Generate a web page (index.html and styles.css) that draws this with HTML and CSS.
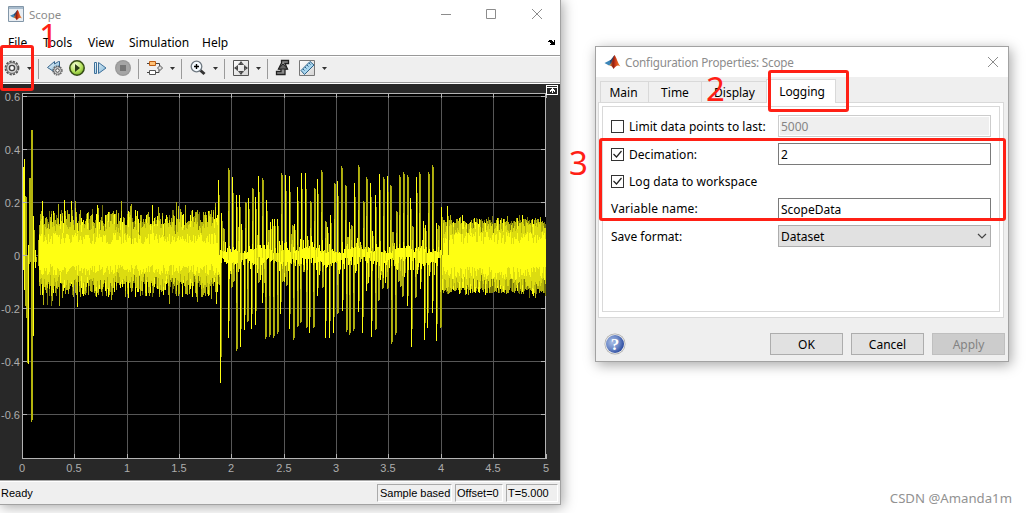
FILE: index.html
```html
<!DOCTYPE html>
<html lang="en">
<head>
<meta charset="utf-8">
<title>Scope</title>
<link rel="stylesheet" href="styles.css">
</head>
<body>
<svg class="defs" width="0" height="0">
  <defs>
    <linearGradient id="flame" x1="0" x2="1" y1="0" y2="0"><stop offset="0" stop-color="#e8a33a"/><stop offset=".35" stop-color="#8c1d14"/><stop offset=".6" stop-color="#d8431a"/><stop offset="1" stop-color="#e98b2c"/></linearGradient>
    <radialGradient id="green" cx=".4" cy=".3" r=".75"><stop offset="0" stop-color="#f6ffd8"/><stop offset=".6" stop-color="#b5e25c"/><stop offset="1" stop-color="#6ba51e"/></radialGradient>
    <linearGradient id="blue" x1="0" x2="1" y1="0" y2="1"><stop offset="0" stop-color="#eaf6fc"/><stop offset="1" stop-color="#7fb4d6"/></linearGradient>
    <radialGradient id="help" cx=".35" cy=".4" r=".7"><stop offset="0" stop-color="#a9bee6"/><stop offset=".55" stop-color="#6c88c6"/><stop offset="1" stop-color="#24439a"/></radialGradient>
    <linearGradient id="paper" x1="0" x2="1" y1="0" y2="1"><stop offset="0" stop-color="#fff"/><stop offset="1" stop-color="#d4d4d4"/></linearGradient>
    <symbol id="matlab" viewBox="0 0 16 16">
      <path d="M0 9 5 6.500 7.500 9.500 4.500 11.500Z" fill="#3d86b8"/>
      <path d="M5 6.500C7 6 8 3 10 1L8.500 8 6.500 10.500Z" fill="#274a73"/>
      <path d="M10 1C12 3 13 9 16 12.500 13 10.500 11.500 12 9 15 8 12.500 6.500 11.500 4.500 11.500 7.500 10 8 4 10 1Z" fill="url(#flame)"/>
    </symbol>
    <symbol id="gear" viewBox="0 0 16 16">
      <circle cx="8" cy="8" r="6.500" fill="none" stroke="#555" stroke-width="1.800" stroke-dasharray="2.300 1.100"/>
      <circle cx="8" cy="8" r="5.400" fill="#d6d6d6" stroke="#5a5a5a" stroke-width=".9"/>
      <circle cx="8" cy="8" r="2.600" fill="#fafafa" stroke="#444" stroke-width="1.400"/>
    </symbol>
  </defs>
</svg>

<main class="desktop">
  <section class="window scope">
    <header class="scope-title">
      <svg class="app-icon" width="16" height="16"><path d="M.5.5h15v15H.5z" fill="#e9eef3" stroke="#8296a8"/><path d="M1 1h14v2H1z" fill="#a9bccd"/><use href="#matlab" x="2" y="3" width="12" height="12"/></svg>
      <span class="title-text">Scope</span>
      <svg class="caption" width="102" height="16" fill="none" stroke="#8c8c8c"><path d="M0 8.500h10M45.500 3.500h9v9h-9zM91 3l10 10M101 3 91 13"/></svg>
    </header>
    <nav class="menu">
      <span class="m-file">File</span><span class="m-tools">Tools</span><span class="m-view">View</span><span class="m-sim">Simulation</span><span class="m-help">Help</span>
      <svg class="dock" width="8" height="6" shape-rendering="crispEdges"><path d="M0 1h1v1H0zM1 0h3v1h1v1h1V0h1v5H2V4h1V3H2V2H1z" fill="#000"/></svg>
    </nav>
    <div class="toolbar">
      <svg width="560" height="25" viewBox="0 57 560 25">
        <use href="#gear" x="4" y="60" width="16" height="16"/>
        <g stroke="#9a9a9a"><path d="M38.500 59v20M138.500 59v20M181.500 59v20M224.500 59v20M267.500 59v20"/></g>
        <g fill="#333"><path id="arrow" d="M27 67h5l-2.500 3z"/><use href="#arrow" x="143"/><use href="#arrow" x="186"/><use href="#arrow" x="229"/><use href="#arrow" x="295"/></g>
        <path d="M47.500 67.500 54.500 61.500v2.500l4-2.500h1v8l-5 4v-1.500z" fill="url(#blue)" stroke="#37658c"/>
        <use href="#gear" x="52" y="65" width="11" height="11"/>
        <circle cx="77" cy="68" r="7.200" fill="url(#green)" stroke="#354c16" stroke-width="1.500"/><path d="M75 64v8l5-4z" fill="#2b3d17"/>
        <path d="M94.500 62.500h2v11h-2zM98.500 62.500v11l7.500-5.500z" fill="url(#blue)" stroke="#3e719b"/>
        <circle cx="123" cy="68" r="8" fill="#999"/><circle cx="123" cy="68" r="6.800" fill="#a5a5a5"/><path d="M120 65h6v6h-6z" fill="#757575"/>
        <path d="M155 63.500h4.500v4M156 72.500h3v-3M147 63.500h2M147 72.500h2" fill="none" stroke="#444"/>
        <path d="M149.500 61.500h6v4h-6z" fill="#ffc277" stroke="#bd5d13"/><path d="M149.500 70.500h6v4h-6z" fill="#fff" stroke="#555"/><path d="m160 65.500 2.500 2.500-2.500 2.500-2.500-2.500z" fill="#ddd" stroke="#555"/>
        <path d="m200 70 4.500 4" stroke="#333" stroke-width="3"/><circle cx="196.500" cy="66.500" r="5.300" fill="#f5fbff" stroke="#707a82" stroke-width="1.300"/><path d="M194 66.500h5M196.500 64v5" stroke="#000" stroke-width="1.400"/>
        <path d="M233.500 60.500h15v15h-15z" fill="url(#paper)" stroke="#555"/><path d="m241 61 3 4h-6zM241 75l3-4h-6zM234 68l4-3v6zM248 68l-4-3v6z" fill="#444"/><circle cx="241" cy="68" r="4.500" fill="none" stroke="#777" stroke-dasharray="2 1.500"/>
        <path d="M276.500 71.500H281V69h-2.500l3-6v-2.500h7v3H285L287.500 69H285v5.500h-8.500z" fill="#8c8c8c" stroke="#222" stroke-width="1.300"/><path d="M278.500 69 283 64l4.500 5z" fill="#666" stroke="#222"/>
        <path d="M299.500 60.500h15v15h-15z" fill="url(#paper)" stroke="#777"/><path d="m301 70.500 9-9 4 3.500-9.500 9.500z" fill="#a8d5ee" stroke="#2e6287"/><path d="m303 69 1.500 1.500M305 67l1.500 1.500M307 65l1.500 1.500M309 63l1.500 1.500" stroke="#2e6287"/>
      </svg>
    </div>
    <div class="plot">
      <svg id="chart" width="560" height="396" viewBox="0 84 560 396" shape-rendering="crispEdges"></svg>
    </div>
    <footer class="status"><span class="ready">Ready</span><span class="cell sample">Sample based</span><span class="cell offset">Offset=0</span><span class="cell time">T=5.000</span></footer>
  </section>

  <section class="window dialog">
    <header class="dialog-title">
      <svg width="17" height="17"><use href="#matlab" width="17" height="16"/></svg>
      <span class="dialog-name">Configuration Properties: Scope</span>
      <svg class="close" width="12" height="12" stroke="#8c8c8c"><path d="m1 1 10 10M11 1 1 11"/></svg>
    </header>
    <div class="tabs"><span class="tab t-main">Main</span><span class="tab t-time">Time</span><span class="tab t-display">Display</span><span class="tab t-logging active">Logging</span></div>
    <div class="pane"><div class="form">
      <label class="row"><span class="label"><i class="box"></i><span class="l-limit">Limit data points to last:</span></span><span class="field disabled">5000</span></label>
      <label class="row"><span class="label"><i class="box"><svg width="11" height="11"><path d="m1.500 5 3 3 5-6" fill="none" stroke="#222" stroke-width="1.200"/></svg></i><span class="l-dec">Decimation:</span></span><span class="field">2</span></label>
      <label class="row"><span class="label"><i class="box"><svg width="11" height="11"><path d="m1.500 5 3 3 5-6" fill="none" stroke="#222" stroke-width="1.200"/></svg></i><span class="l-log">Log data to workspace</span></span></label>
      <label class="row"><span class="label"><span class="l-var">Variable name:</span></span><span class="field">ScopeData</span></label>
      <label class="row"><span class="label"><span class="l-save">Save format:</span></span><span class="field select">Dataset<svg width="10" height="6"><path d="m1 1 4 4 4-4" fill="none" stroke="#444" stroke-width="1.200"/></svg></span></label>
    </div></div>
    <footer class="actions">
      <svg class="help" width="22" height="22"><circle cx="11" cy="11" r="10.500" fill="#aaa"/><circle cx="11" cy="11" r="9.800" fill="#eee"/><circle cx="11" cy="11" r="9" fill="url(#help)"/><text x="11" y="17" text-anchor="middle">?</text></svg>
      <span class="button">OK</span><span class="button">Cancel</span><span class="button off">Apply</span>
    </footer>
  </section>

  <div class="mark mark-1"></div><div class="mark mark-2"></div><div class="mark mark-3"></div>
  <span class="num num-1">1</span><span class="num num-2">2</span><span class="num num-3">3</span>
  <span class="credit">CSDN @Amanda1m</span>
</main>
<script src="plot.js"></script>
</body>
</html>
```
FILE: styles.css
```css
body { margin: 0; background: #fff; color: #000; }
.defs { position: absolute; }
.desktop { position: relative; width: 1026px; height: 513px; overflow: hidden; font: 12px "Noto Sans", sans-serif; white-space: nowrap; }
svg { display: block; flex: none; }
.window { position: absolute; box-sizing: border-box; display: flex; flex-direction: column; border: 1px solid #a2a2a2; }

.scope { left: -1px; top: -1px; width: 562px; height: 506px; background: #fff; box-shadow: 2px 2px 12px rgba(0,0,0,.35); }
.scope-title { height: 28px; display: flex; align-items: center; padding: 0 17px 0 8px; color: #8c8c8c; }
.title-text { margin-left: 5px; font-size: 11.500px; }
.caption { margin-left: auto; }
.menu { height: 27px; box-sizing: border-box; display: flex; align-items: center; padding: 2px 4px 0 8px; }
.menu span { flex: none; }
.m-file { width: 35px; } .m-tools { width: 45px; } .m-view { width: 41px; } .m-sim { width: 73px; }
.dock { margin-left: auto; }
.toolbar { height: 25px; background: #efefef; border: solid #999; border-width: 1px 0; box-shadow: inset 0 1px #fff; padding-top: 1px; }
.plot { height: 396px; margin-top: 1px; background: #282828; }
.plot text { font: 11px "Liberation Sans", sans-serif; fill: #adadad; }
.status { height: 24px; box-sizing: border-box; display: flex; align-items: center; gap: 3px; background: #efefef; border-top: 1px solid #a8a8a8; box-shadow: inset 0 1px #fff; padding: 1px 2px 0 1px; font: 11px "Liberation Sans", sans-serif; }
.ready { margin-right: auto; }
.cell { box-sizing: border-box; height: 18px; line-height: 16px; padding-left: 2px; border: 1px solid; border-color: #aaa #fff #fff #aaa; }
.sample { width: 75px; padding-left: 2px; } .offset { width: 48px; padding-left: 1px; } .time { width: 52px; padding-left: 1px; }

.dialog { left: 595px; top: 46px; width: 414px; height: 316px; background: #efefef; box-shadow: 2px 3px 12px rgba(0,0,0,.35); }
.dialog-title { height: 30px; display: flex; align-items: center; padding: 0 9px 0 8px; background: #fff; color: #8c8c8c; font-size: 11.700px; }
.dialog-name { margin-left: 4px; letter-spacing: -.19px; }
.close { margin-left: auto; }
.tabs { height: 25px; box-sizing: border-box; display: flex; align-items: flex-end; padding-left: 4px; }
.tab { box-sizing: border-box; height: 21px; line-height: 21px; text-align: center; background: #f0f0f0; border: solid #d9d9d9; border-width: 1px 0 0 1px; }
.t-main { width: 48px; padding-right: 2px; } .t-time { width: 53px; } .t-display { width: 65px; padding-left: 1px; }
.tab.active { width: 70px; height: 24px; line-height: 23px; margin-bottom: -1px; padding: 0 0 1px 2px; letter-spacing: -.1px; background: #fff; border-right-width: 1px; z-index: 1; }
.pane { width: 406px; height: 216px; box-sizing: border-box; margin-left: 2px; padding: 3px; background: #fff; border: 1px solid #d9d9d9; }
.form { box-sizing: border-box; width: 398px; height: 206px; padding: 5px 8px; border: 1px solid #d9d9d9; display: grid; grid-template-rows: 28px 28px 27px 27px 28px; align-content: start; }
.row { display: flex; align-items: center; }
.label { width: 167px; display: flex; align-items: center; gap: 5px; }
.box { box-sizing: border-box; width: 13px; height: 13px; background: #fff; border: 1px solid #333; }
.field { flex: none; box-sizing: border-box; width: 213px; height: 22px; line-height: 21px; padding-left: 2px; border: 1px solid #7a7a7a; background: #fff; }
.disabled { color: #858585; background: #efefef; border-color: #ccc; box-shadow: inset 0 0 0 1px #fff; }
.select { display: flex; align-items: center; justify-content: space-between; background: #e1e1e1; border-color: #adadad; padding-right: 3px; }
.l-limit, .l-dec, .l-log, .l-var { letter-spacing: .04px; }
.l-var { letter-spacing: .2px; }
.actions { display: flex; align-items: center; gap: 8px; padding: 15px 3px 0 8px; }
.help { margin-right: auto; }
.help text { font: bold 17px "Liberation Serif", serif; fill: #fff; }
.button { box-sizing: border-box; width: 73px; height: 22px; line-height: 21px; text-align: center; background: #e1e1e1; border: 1px solid #adadad; }
.off { color: #838383; background: #ccc; border-color: #bfbfbf; }

.mark { position: absolute; z-index: 2; box-sizing: border-box; border: 3px solid #ff2015; border-radius: 3px; }
.mark-1 { left: 0; top: 45px; width: 34px; height: 46px; }
.mark-2 { left: 768px; top: 70px; width: 81px; height: 42px; }
.mark-3 { left: 599px; top: 138px; width: 407px; height: 83px; }
.num { position: absolute; z-index: 2; font-size: 33px; line-height: 40px; color: #ff2015; }
.num-1 { left: 39px; top: 16px; } .num-2 { left: 706px; top: 69px; } .num-3 { left: 569px; top: 143px; }
.credit { position: absolute; right: 14px; top: 489px; font: 13.200px/18px "Noto Sans", sans-serif; color: #929292; }
```
FILE: plot.js
```js
const out = [];
const rect = (x, y, w, h, fill) => out.push(`<rect x="${x}" y="${y}" width="${w}" height="${h}" fill="${fill}"/>`);
const ZERO = 255;
rect(22, 93, 524, 366, '#000');
for (let i = 1; i < 10; i++) rect(Math.round(22 + i * 52.35), 94, 1, 364, '#575757');
for (let i = 0; i < 7; i++) rect(23, 96 + i * 53, 522, 1, '#575757');

// Repeatable noise
let seed = 7;
const rnd = () => (seed = (seed * 16807) % 2147483647) / 2147483647;
const BRIGHT = '#ffff12', MID = '#dcdc10', DIM = '#b4b40e', DARK = '#77770a';

function band(x0, x1, up, down, jitter) {
  for (let x = x0; x < x1; x++) {
    const t = up + rnd() * jitter * 0.7 + (rnd() < 0.12 ? jitter * 0.45 : 0);
    const b = down + rnd() * jitter * 0.7 + (rnd() < 0.12 ? jitter * 0.45 : 0);
    rect(x, ZERO - t, 1, t + b, rnd() < 0.2 ? BRIGHT : rnd() < 0.3 ? DARK : DIM);
    const mt = t * (0.6 + rnd() * 0.35), mb = b * (0.6 + rnd() * 0.35);
    rect(x, ZERO - mt, 1, mt + mb, MID);
    const ct = up * (0.35 + rnd() * 0.4), cb = down * (0.35 + rnd() * 0.4);
    rect(x, ZERO - ct, 1, ct + cb, BRIGHT);
  }
}
band(39, 220, 30, 27, 22);
band(441, 546, 31, 33, 9);
rect(131, 204, 1, 40, DIM); rect(97, 205, 1, 40, BRIGHT); rect(152, 205, 1, 40, BRIGHT);
rect(42, 201, 1, 54, BRIGHT); rect(59, 275, 1, 31, DIM); rect(169, 275, 1, 29, DIM);

// Start-up transient
[[23,167,270,1],[24,159,290,1],[25,196,306,0],[26,197,318,0],[27,255,363,0],[28,245,364,1],[29,178,264,0],[30,178,262,0],[31,130,422,0],[32,130,420,0],[33,216,336,1],[34,230,262,0],[35,250,268,1],[36,257,262,0],[38,240,266,0]]
  .forEach(([x, a, b, bright]) => rect(x, a, 1, b - a, bright ? BRIGHT : DIM));

// Spikes as x, y pairs in thirds of a pixel from (200, 140)
const up = [55,120,65,220,71,264,86,84,97,112,108,165,114,262,119,165,125,252,135,187,146,174,157,144,165,170,171,285,176,108,187,114,199,180,206,270,212,247,218,237,223,237,233,238,244,99,255,106,267,108,273,282,277,256,283,252,293,141,305,99,315,99,322,288,332,183,342,144,353,117,364,90,376,243,382,260,391,225,403,129,413,124,424,78,436,136,442,292,447,246,453,255,463,129,474,75,480,305,489,183,500,111,
  511,129,517,273,527,165,538,102,549,111,561,108,572,135,577,276,588,213,599,105,610,96,621,105,632,174,638,258,648,111,659,96,670,243,676,255,685,96,696,75,708,249,714,255,723,202,742,198];
const down = [62,728,84,593,89,416,95,445,100,425,110,632,121,620,133,570,143,545,150,388,155,566,167,555,171,400,175,430,181,420,186,490,192,428,197,597,208,590,219,594,231,582,242,521,248,425,252,425,260,437,268,566,280,599,291,560,302,548,309,395,318,563,328,578,340,564,351,467,358,404,368,443,377,593,389,593,401,578,412,521,417,402,427,512,438,575,449,584,461,572,466,398,476,515,487,578,500,452,504,430,
  514,590,525,569,536,482,541,420,548,446,555,430,562,446,574,611,585,584,596,427,601,440,607,470,613,412,623,497,635,620,646,473,652,403,661,446,672,599,683,563,689,407,698,518,710,602,721,563];
function spikes(list, dir) {
  for (let i = 0; i < list.length; i += 2) {
    const x = Math.floor(200 + list[i] / 3), y = Math.round(140 + list[i + 1] / 3);
    const bright = rnd() < 0.5;
    const top = Math.min(y, ZERO), h = Math.abs(y - ZERO);
    rect(x, top, 1, h, bright ? BRIGHT : '#b4b40e');
    const h2 = Math.round(h * (bright ? 0.8 : 0.98));
    rect(x + 1, dir < 0 ? ZERO - h2 : ZERO, 1, h2, bright ? '#8c8c0c' : '#a8a80e');
    const h3 = Math.round(h * 0.5);
    rect(x, dir < 0 ? ZERO - h3 : ZERO, 1, h3, bright ? BRIGHT : MID);
  }
}
spikes(up, -1);
spikes(down, 1);
for (let x = 220; x < 441; x++) {
  const wave = Math.sin((x - 200) / 7.6) * 5;
  const a = Math.round(2 + rnd() * rnd() * 14 + Math.max(0, wave)), b = Math.round(2 + rnd() * rnd() * 18 + Math.max(0, -wave));
  rect(x, ZERO - a, 1, a + b, rnd() < 0.3 ? MID : BRIGHT);
}

// Axis frame, ticks and labels
const AXIS = '#b4b4b4';
rect(22, 93, 524, 1, AXIS); rect(22, 458, 524, 1, AXIS); rect(22, 93, 1, 366, AXIS); rect(545, 93, 1, 124, AXIS); rect(545, 296, 1, 163, AXIS);
for (let i = 0; i <= 10; i++) {
  const x = Math.round(22 + i * 52.35);
  rect(x, 93, 1, 5, AXIS); rect(x, 454, 1, 5, AXIS);
  out.push(`<text x="${x}" y="472" text-anchor="middle">${i / 2}</text>`);
}
for (let i = 0; i < 7; i++) {
  const y = 96 + i * 53;
  rect(22, y, 5, 1, AXIS);
  if (i !== 3) rect(541, y, 5, 1, AXIS);
  out.push(`<text x="20" y="${y + 5}" text-anchor="end">${+(0.6 - i * 0.2).toFixed(1)}</text>`);
}
out.push('<path d="M546.500 85.500h11v9h-11zM546.500 87.500h11M552.500 93v-4M550 91.500l2.500-2.500 2.500 2.500" fill="none" stroke="#fff"/>');
document.getElementById('chart').innerHTML = out.join('');
```
